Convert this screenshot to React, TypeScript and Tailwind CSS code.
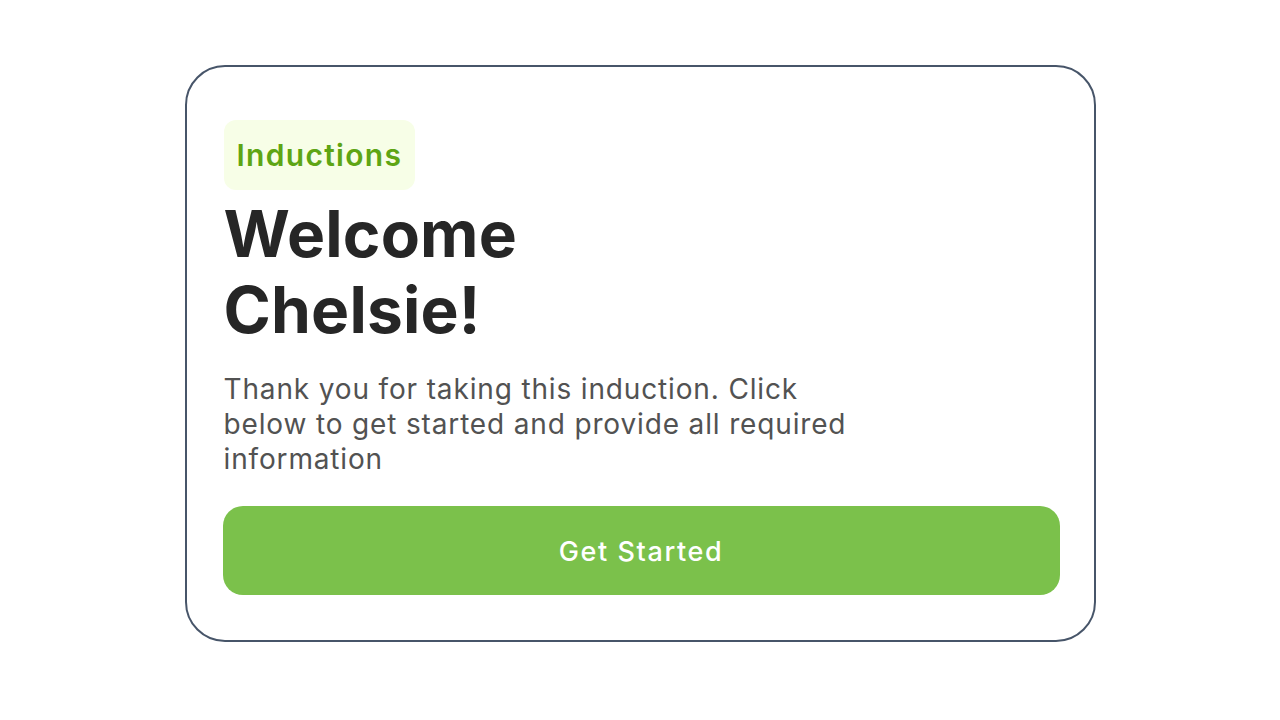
export default function App() {
  return (
    <div
      className="min-h-screen bg-white flex justify-center pt-[65px]"
      style={{ fontFamily: "Inter, 'Noto Sans', sans-serif" }}
    >
      <div className="w-[911px] h-[577px] rounded-[40px] border-2 border-[#475569] pl-[36px] pr-[34px] pt-[53px] flex flex-col">
        <div className="self-start ml-px rounded-xl bg-[#f7fee7] px-[13px] h-[70px] flex items-center">
          <span className="text-[30px] font-semibold tracking-[1.3px] text-[#5ea514]">Inductions</span>
        </div>
        <h1 className="mt-[6px] ml-px text-[64px] leading-[76px] font-bold text-[#262626] tracking-[0.2px]">
          Welcome
          <br />
          Chelsie!
        </h1>
        <p className="mt-[24px] ml-px max-w-[640px] text-[28px] leading-[35px] tracking-[0.85px] text-[#525252]">
          Thank you for taking this induction. Click below to get started and provide all required
          information
        </p>
        <button className="mt-[29px] pt-[3px] h-[89px] w-full rounded-[20px] bg-[#7bc14b] text-white text-[27px] font-medium tracking-[1.6px]">
          Get Started
        </button>
      </div>
    </div>
  );
}
